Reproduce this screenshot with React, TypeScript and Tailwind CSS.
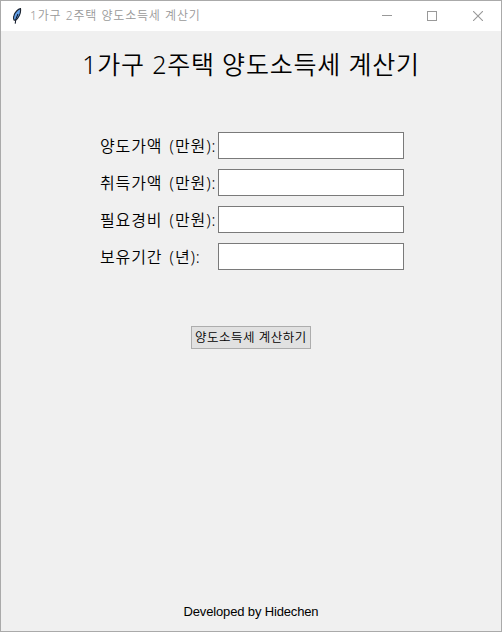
import { useState } from "react";

const fields = [
  { id: "salePrice", label: "양도가액 (만원):" },
  { id: "purchasePrice", label: "취득가액 (만원):" },
  { id: "expenses", label: "필요경비 (만원):" },
  { id: "holdingPeriod", label: "보유기간 (년):" },
];

function FeatherIcon() {
  return (
    <svg width="10" height="16" viewBox="0 0 10 16" fill="none">
      <path d="M8.5.6C6 1.100 3 4.200 2 7.500c-.7 2-.7 3.200.1 4.600h1.700C6.300 10.300 9.200 5.600 8.500.6z" fill="#62a0ea" stroke="#1c242f" strokeWidth="1.1" />
      <path d="M6 6C4.500 8.500 3.500 11 3.200 15.600" stroke="#10192a" strokeWidth="1.1" />
    </svg>
  );
}

function TitleBar() {
  return (
    <header className="flex h-[30px] items-center bg-white text-[#999999]">
      <div className="ml-[11px] flex w-[18px] items-center">
        <FeatherIcon />
      </div>
      <span className="flex-1 whitespace-nowrap text-[12px] leading-[18px] font-[350] tracking-[0.8px] [word-spacing:0.5px]">
        1가구 2주택 양도소득세 계산기
      </span>
      <div className="flex text-[#999999]">
        <button title="최소화" className="flex h-[30px] w-[45px] items-center justify-center">
          <svg width="10" height="10" shapeRendering="crispEdges">
            <rect y="4" width="10" height="1" fill="currentColor" />
          </svg>
        </button>
        <button title="최대화" className="flex h-[30px] w-[46px] items-center justify-center">
          <svg width="10" height="10" fill="none" stroke="currentColor" shapeRendering="crispEdges">
            <rect x="0.5" y="0.5" width="9" height="9" />
          </svg>
        </button>
        <button title="닫기" className="flex h-[30px] w-[46px] items-center justify-center">
          <svg width="10" height="10" fill="none" stroke="currentColor" strokeWidth="1.1">
            <path d="M0 0l10 10M10 0L0 10" />
          </svg>
        </button>
      </div>
    </header>
  );
}

export default function App() {
  const [values, setValues] = useState<Record<string, string>>({});

  return (
    <div className="flex h-screen w-full flex-col border border-[#aaaaaa] bg-[#f0f0f0] font-['Noto_Sans','Noto_Sans_CJK_KR',sans-serif] text-black">
      <TitleBar />

      <main className="flex flex-1 flex-col items-center">
        <h1 className="mt-[15px] whitespace-nowrap text-[25px] leading-[36px] font-[350] tracking-[0.8px]">1가구 2주택 양도소득세 계산기</h1>

        <form className="mt-[50px] flex flex-col items-center" onSubmit={(e) => e.preventDefault()}>
          <div className="flex flex-col gap-[10px] pl-[2px]">
            {fields.map((field) => (
              <div key={field.id} className="flex h-[27px] items-center">
                <label htmlFor={field.id} className="w-[118px] whitespace-nowrap pt-[2px] text-[16px] leading-[27px] font-[350] tracking-[0.9px] [word-spacing:2px]">
                  {field.label}
                </label>
                <input
                  id={field.id}
                  value={values[field.id] ?? ""}
                  onChange={(e) => setValues({ ...values, [field.id]: e.target.value })}
                  className="h-[27px] w-[186px] border border-[#7a7a7a] bg-white px-1 focus:outline-none"
                />
              </div>
            ))}
          </div>

          <button className="mt-[56px] flex h-[23px] w-[120px] items-center justify-center whitespace-nowrap border border-[#adadad] bg-[#e1e1e1] text-[12.5px] leading-[18px] font-[350] tracking-[0.5px]">
            양도소득세 계산하기
          </button>
        </form>
      </main>

      <footer className="mb-[11px] text-center font-['Liberation_Sans',sans-serif] text-[13px] leading-[17px] tracking-[-0.15px]">Developed by Hidechen</footer>
    </div>
  );
}
